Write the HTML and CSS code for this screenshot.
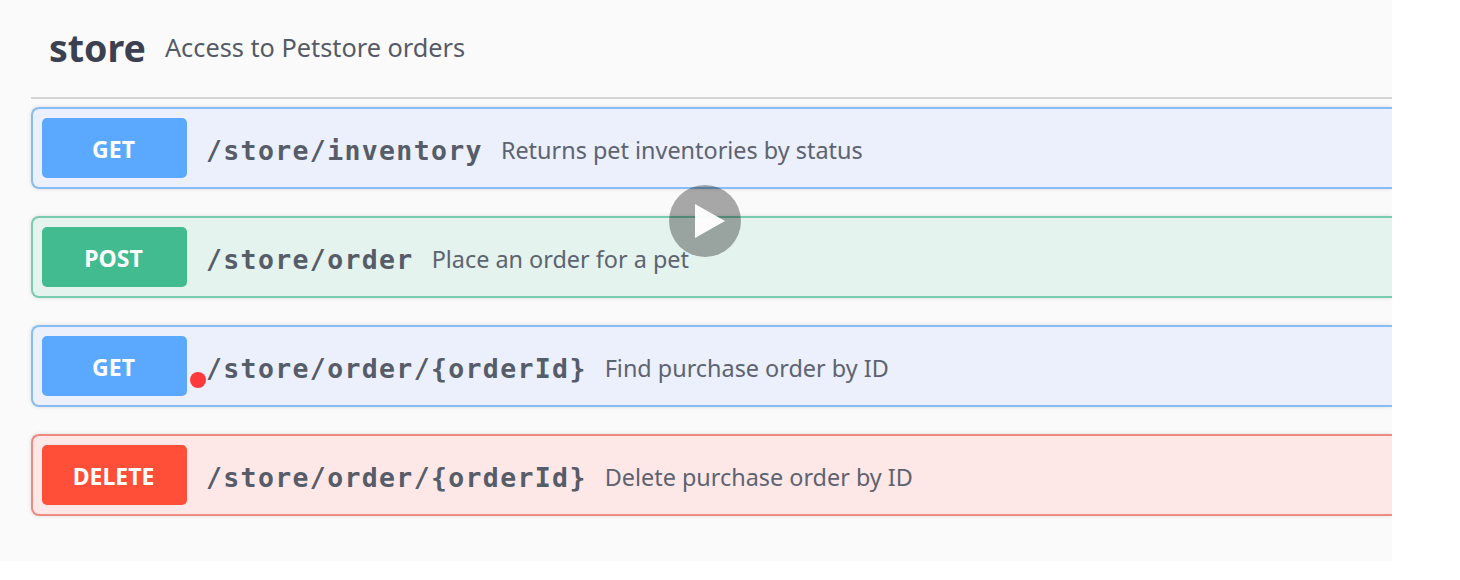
FILE: index.html
```
<!DOCTYPE html>
<html lang="en">
<head>
<meta charset="utf-8">
<title>store</title>
<link rel="stylesheet" href="styles.css">
</head>
<body>
<main class="panel">
  <header class="tag">
    <h1 class="tag-name">store</h1>
    <p class="tag-desc">Access to Petstore orders</p>
  </header>
  <section class="ops">
    <div class="op get"><span class="method">GET</span><span class="path">/store/inventory</span><span class="desc">Returns pet inventories by status</span></div>
    <div class="op post"><span class="method">POST</span><span class="path">/store/order</span><span class="desc">Place an order for a pet</span></div>
    <div class="op get"><span class="method">GET</span><span class="path">/store/order/{orderId}</span><span class="desc">Find purchase order by ID</span></div>
    <div class="op delete"><span class="method">DELETE</span><span class="path">/store/order/{orderId}</span><span class="desc">Delete purchase order by ID</span></div>
  </section>
  <span class="pointer"></span>
  <svg class="play" width="72" height="72" viewBox="0 0 72 72"><circle cx="36" cy="36" r="36" fill="#000" fill-opacity=".33"/><path d="M26 19L56 36L26 53Z" fill="#fff" fill-opacity=".97"/></svg>
</main>
</body>
</html>
```
FILE: styles.css
```
* { box-sizing: border-box; }
body { margin: 0; background: #fff; font-family: "Noto Sans", "Open Sans", sans-serif; color: #3b4151; }
.panel { position: relative; width: 1392px; height: 561px; background: #fafafa; overflow: hidden; padding-left: 31px; }
.tag { display: flex; align-items: flex-start; gap: 19px; height: 99px; padding: 22px 0 0 18px; border-bottom: 2px solid #d4d4d6; }
.tag-name { margin: 0; font-size: 37.5px; line-height: 52px; font-weight: 700; }
.tag-desc { margin: 0; font-size: 25.3px; line-height: 50px; color: #555a66; white-space: nowrap; }
.ops { display: flex; flex-direction: column; gap: 27px; padding-top: 8px; }
.op { display: flex; align-items: center; height: 82px; padding-left: 9px; border: 2px solid; border-right: 0; border-radius: 8px 0 0 8px; white-space: nowrap; box-shadow: 0 0 4px rgba(0,0,0,.12); }
.method { display: flex; align-items: center; justify-content: center; width: 145px; height: 60px; padding: 2px 2px 0 0; border-radius: 5px; color: #fff; font-size: 23px; font-weight: 700; }
.path { margin-left: 19px; padding-top: 4px; font: 700 26.5px "DejaVu Sans Mono", monospace; letter-spacing: 1.35px; color: #565c68; }
.desc { margin-left: 18px; padding-top: 4px; font-size: 23.4px; color: #5d6370; }
.get { background: #ebf0fc; border-color: #86bdf4; }
.get .method { background: #5aa9ff; }
.post { background: #e4f3ed; border-color: #79ccb0; }
.post .method { background: #42bb91; }
.delete { background: #fee8e7; border-color: #ee8a7f; }
.delete .method { background: #ff4f39; }
.pointer { position: absolute; left: 190px; top: 372px; width: 16px; height: 16px; border-radius: 50%; background: #ff3a3d; }
.play { position: absolute; left: 669px; top: 185px; }
```
